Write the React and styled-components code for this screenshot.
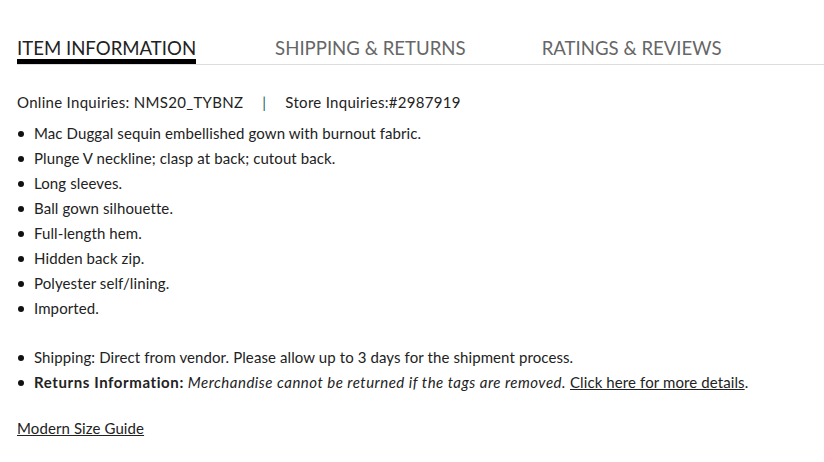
import styled, { createGlobalStyle } from "styled-components";

const GlobalStyle = createGlobalStyle`
  body {
    margin: 0;
    background: #fff;
    font-family: Lato, "Liberation Sans", sans-serif;
    color: #222;
  }
`;

const Wrap = styled.div`
  padding: 37px 0 0 17px;
  width: 824px;
  height: 462px;
  box-sizing: border-box;
`;

const Tabs = styled.div`
  display: flex;
  border-bottom: 1px solid #ddd;
`;

const Tab = styled.div`
  font-size: 18.6px;
  line-height: 22px;
  margin-right: ${(p) => p.$gap || 0}px;
  color: ${(p) => (p.$active ? "#222" : "#666")};
  border-bottom: 5px solid ${(p) => (p.$active ? "#000" : "transparent")};
`;

const Content = styled.div`
  padding-top: 25px;
  font-size: 15px;
  letter-spacing: 0.1px;
`;

const Inquiries = styled.div`
  line-height: 25px;
  margin-bottom: 6px;
  letter-spacing: 0.3px;
`;

const Sep = styled.span`
  color: #1f5f6b;
  margin: 0 19px;
`;

const List = styled.ul`
  list-style: none;
  margin: 0 0 24px;
  padding: 0;
  line-height: 25px;
`;

const Item = styled.li`
  position: relative;
  padding-left: 17px;

  &::before {
    content: "";
    position: absolute;
    left: 1px;
    top: 10px;
    width: 6px;
    height: 6px;
    border-radius: 50%;
    background: #111;
  }
`;

const Label = styled.strong`
  font-weight: 700;
  letter-spacing: 0.6px;
`;

const Note = styled.em`
  font-style: italic;
  letter-spacing: 0.5px;
`;

const Link = styled.a`
  color: #222;
  text-decoration: underline;
`;

const GuideLink = styled.a`
  display: inline-block;
  line-height: 25px;
  color: #222;
  text-decoration: underline;
  margin-top: -3px;
`;

const details = [
  "Mac Duggal sequin embellished gown with burnout fabric.",
  "Plunge V neckline; clasp at back; cutout back.",
  "Long sleeves.",
  "Ball gown silhouette.",
  "Full-length hem.",
  "Hidden back zip.",
  "Polyester self/lining.",
  "Imported.",
];

export default function App() {
  return (
    <>
      <GlobalStyle />
      <Wrap>
        <Tabs>
          <Tab $active $gap={79}>ITEM INFORMATION</Tab>
          <Tab $gap={76}>SHIPPING &amp; RETURNS</Tab>
          <Tab>RATINGS &amp; REVIEWS</Tab>
        </Tabs>
        <Content>
          <Inquiries>
            Online Inquiries: NMS20_TYBNZ<Sep>|</Sep>Store Inquiries:#2987919
          </Inquiries>
          <List>
            {details.map((d) => (
              <Item key={d}>{d}</Item>
            ))}
          </List>
          <List>
            <Item>Shipping: Direct from vendor. Please allow up to 3 days for the shipment process.</Item>
            <Item>
              <Label>Returns Information:</Label>{" "}
              <Note>Merchandise cannot be returned if the tags are removed.</Note>{" "}
              <Link href="#">Click here for more details</Link>.
            </Item>
          </List>
          <GuideLink href="#">Modern Size Guide</GuideLink>
        </Content>
      </Wrap>
    </>
  );
}
